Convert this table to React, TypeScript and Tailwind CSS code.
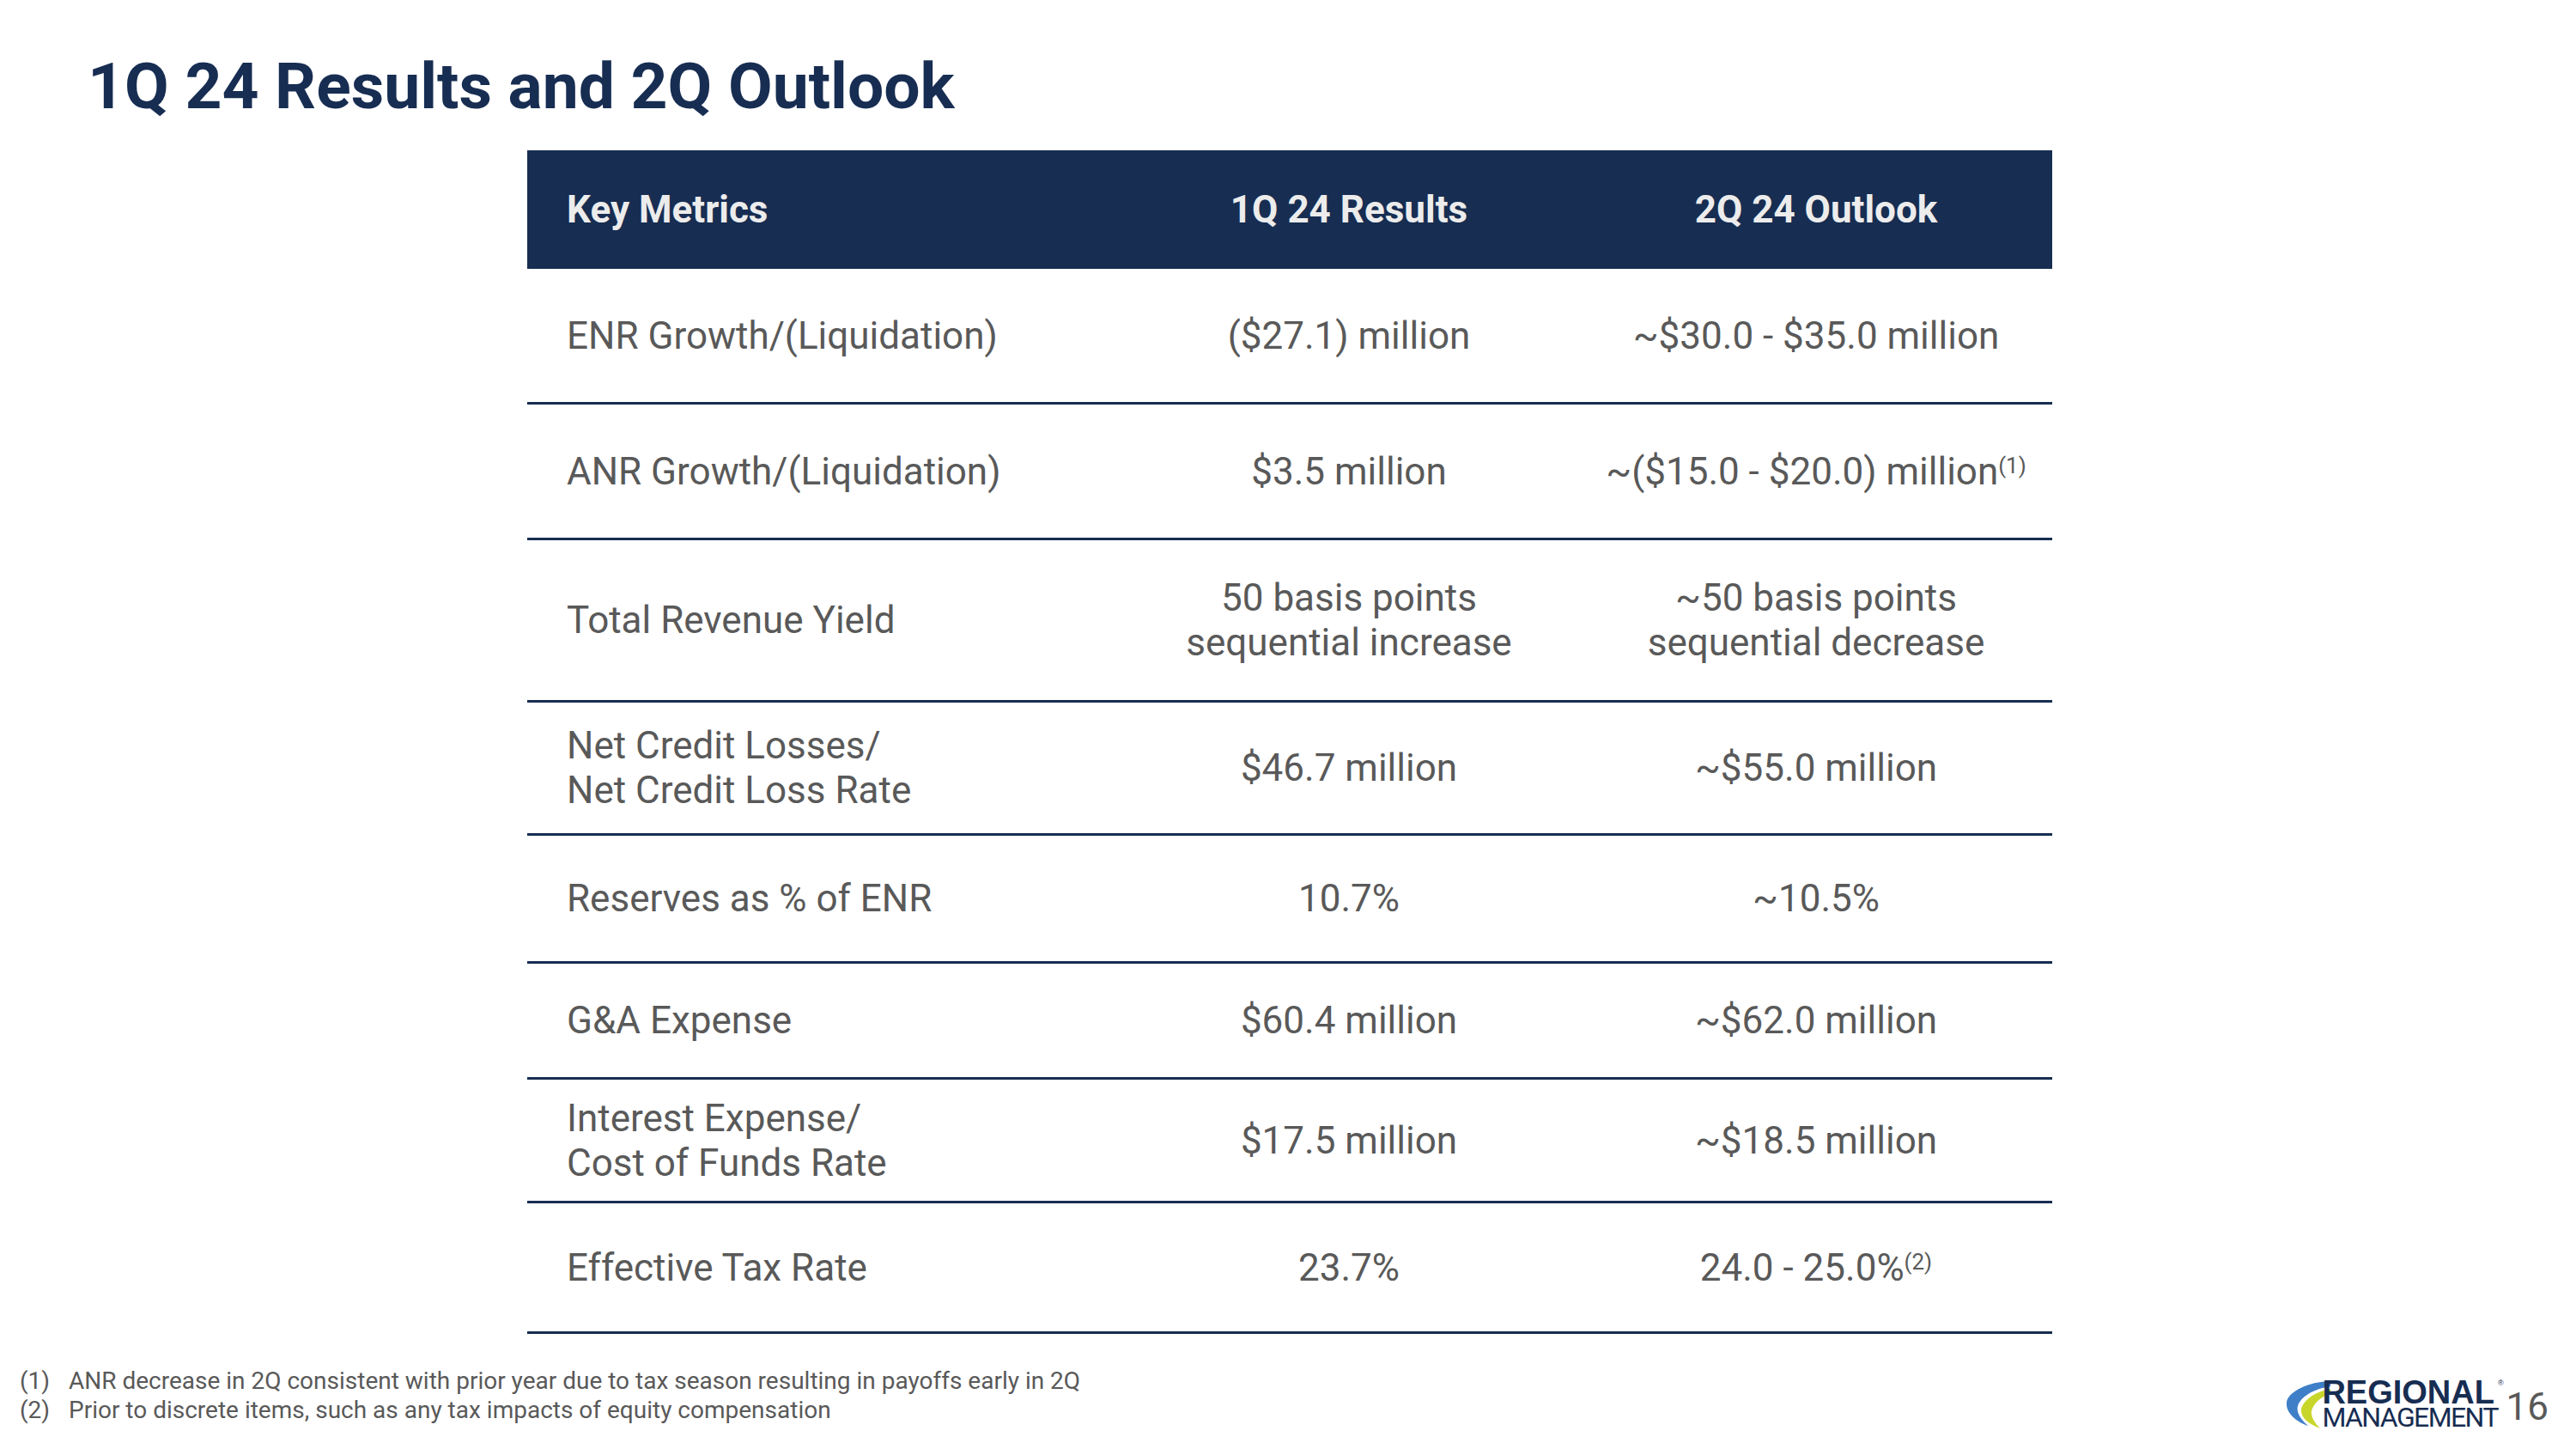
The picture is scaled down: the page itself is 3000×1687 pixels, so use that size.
const rows: { label: string[]; q1: string[]; q2: string[]; note?: string; h: string }[] = [
  { label: ["ENR Growth/(Liquidation)"], q1: ["($27.1) million"], q2: ["~$30.0 - $35.0 million"], h: "h-[158px]" },
  { label: ["ANR Growth/(Liquidation)"], q1: ["$3.5 million"], q2: ["~($15.0 - $20.0) million"], note: "(1)", h: "h-[158px]" },
  {
    label: ["Total Revenue Yield"],
    q1: ["50 basis points", "sequential increase"],
    q2: ["~50 basis points", "sequential decrease"],
    h: "h-[189px]",
  },
  { label: ["Net Credit Losses/", "Net Credit Loss Rate"], q1: ["$46.7 million"], q2: ["~$55.0 million"], h: "h-[155px]" },
  { label: ["Reserves as % of ENR"], q1: ["10.7%"], q2: ["~10.5%"], h: "h-[149px]" },
  { label: ["G&A Expense"], q1: ["$60.4 million"], q2: ["~$62.0 million"], h: "h-[135px]" },
  { label: ["Interest Expense/", "Cost of Funds Rate"], q1: ["$17.5 million"], q2: ["~$18.5 million"], h: "h-[144px]" },
  { label: ["Effective Tax Rate"], q1: ["23.7%"], q2: ["24.0 - 25.0%"], note: "(2)", h: "h-[152px]" },
];

function Lines({ lines }: { lines: string[] }) {
  return (
    <>
      {lines.map((l, i) => (
        <div key={i}>{l}</div>
      ))}
    </>
  );
}

function Logo() {
  return (
    <div className="flex items-start">
      <svg width="56" height="60" viewBox="0 0 56 60" className="mt-[2px] -mr-[10px]">
        <path d="M58 3 C32 3 6 15 5 28 C4 40 16 50 30 55 C21 47 16 39 18 32 C21 21 38 11 58 9 Z" fill="#3f7fc8" />
        <path d="M58 12 C40 14 24 25 22 36 C21 45 30 53 44 58 C37 51 33 44 34 38 C36 29 46 20 58 17 Z" fill="#c8d62b" />
      </svg>
      <div className="flex flex-col text-[#172d52]">
        <div className="font-['Liberation_Sans',Arial,sans-serif] font-bold text-[38px] leading-[30px] mt-[3px]">REGIONAL</div>
        <div className="mt-[1px] font-['Roboto',sans-serif] text-[32px] leading-[26px] tracking-[-1.6px]">MANAGEMENT</div>
      </div>
      <div className="font-['Liberation_Sans',sans-serif] text-[9px] leading-none text-[#172d52] mt-[3px]">®</div>
      <div className="ml-[3px] mt-[13px] font-['Roboto',sans-serif] text-[44px] leading-none text-[#595959]">16</div>
    </div>
  );
}

export default function App() {
  return (
    <div className="w-[3000px] h-[1687px] bg-white flex flex-col font-['Roboto','Liberation_Sans',sans-serif] overflow-hidden">
      {/* Title */}
      <h1 className="pt-[63px] pl-[102px] text-[75px] leading-none font-bold text-[#172d52]">
        1Q 24 Results and 2Q Outlook
      </h1>

      {/* Metrics table */}
      <div className="mt-[37px] ml-[614px] w-[1776px] text-[44px] leading-[52px]">
        <div className="grid grid-cols-[688px_538px_550px] h-[138px] bg-[#172d52] text-[#ececec] font-bold items-center">
          <div className="pl-[46px]">Key Metrics</div>
          <div className="text-center">1Q 24 Results</div>
          <div className="text-center">2Q 24 Outlook</div>
        </div>
        {rows.map((r, i) => (
          <div
            key={i}
            className={`grid grid-cols-[688px_538px_550px] items-center border-b-[3px] border-[#172d52] text-[#595959] ${r.h}`}
          >
            <div className="pl-[46px]">
              <Lines lines={r.label} />
            </div>
            <div className="text-center">
              <Lines lines={r.q1} />
            </div>
            <div className="text-center">
              {r.note ? (
                <div>
                  {r.q2[0]}
                  <sup className="text-[26px]">{r.note}</sup>
                </div>
              ) : (
                <Lines lines={r.q2} />
              )}
            </div>
          </div>
        ))}
      </div>

      {/* Footer */}
      <div className="mt-[38px] flex justify-between items-start pl-[23px] pr-[32px]">
        <div className="grid grid-cols-[57px_1fr] text-[28px] leading-[34px] text-[#595959]">
          <div>(1)</div>
          <div>ANR decrease in 2Q consistent with prior year due to tax season resulting in payoffs early in 2Q</div>
          <div>(2)</div>
          <div>Prior to discrete items, such as any tax impacts of equity compensation</div>
        </div>
        <div className="mt-[12px]">
          <Logo />
        </div>
      </div>
    </div>
  );
}
